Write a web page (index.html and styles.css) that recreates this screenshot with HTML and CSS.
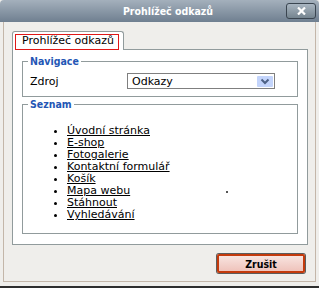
FILE: index.html
```html
<!DOCTYPE html>
<html lang="cs">
<head>
   <meta charset="UTF-8">
   <title>Prohlížeč odkazů</title>
   <link rel="stylesheet" href="styles.css">
</head>
<body>
   <div class="window">
      <div class="titlebar">
         <span class="title">Prohlížeč odkazů</span>
         <button class="close" type="button" aria-label="Zavřít">
            <svg width="9" height="8" viewBox="0 0 9 8"><path d="M1 0.5 L8 7.5 M8 0.5 L1 7.5" stroke="#fff" stroke-width="2.2" fill="none"/></svg>
         </button>
      </div>

      <div class="frame">
         <div class="tabs">
            <div class="tab"><span class="tab-label">Prohlížeč odkazů</span></div>
         </div>

         <div class="panel">
            <fieldset class="group">
               <legend>Navigace</legend>
               <div class="row">
                  <label>Zdroj</label>
                  <div class="select">
                     <span class="select-value">Odkazy</span>
                     <span class="select-arrow">
                        <svg width="10" height="7" viewBox="0 0 10 7"><path d="M1.5 1.5 L5 5 L8.5 1.5" stroke="#4d6185" stroke-width="2" fill="none"/></svg>
                     </span>
                  </div>
               </div>
            </fieldset>

            <fieldset class="group list-group">
               <legend>Seznam</legend>
               <ul class="links">
                  <li><a href="#">Úvodní stránka</a></li>
                  <li><a href="#">E-shop</a></li>
                  <li><a href="#">Fotogalerie</a></li>
                  <li><a href="#">Kontaktní formulář</a></li>
                  <li><a href="#">Košík</a></li>
                  <li><a href="#">Mapa webu</a></li>
                  <li><a href="#">Stáhnout</a></li>
                  <li><a href="#">Vyhledávání</a></li>
               </ul>
               <span class="speck"></span>
            </fieldset>
         </div>

         <div class="actions">
            <button class="btn-cancel" type="button">Zrušit</button>
         </div>
      </div>
   </div>
</body>
</html>
```

FILE: styles.css
```css
body {
   margin: 0;
   background-color: #efeeeb;
   font-family: "DejaVu Sans", Verdana, sans-serif;
   font-size: 11px;
   color: #000;
}

.window {
   width: 319px;
   height: 286px;
   border-bottom: 2px solid #2e2e2e;
   background-color: #efeeeb;
}

.titlebar {
   height: 22px;
   display: flex;
   align-items: center;
   background: linear-gradient(#a4b0bc, #6f7f90);
   border-radius: 4px 4px 0 0;
}

.title {
   flex: 1;
   padding-left: 50px;
   text-align: center;
   color: #fff;
   font-family: "DejaVu Sans Condensed", "DejaVu Sans", sans-serif;
   font-stretch: condensed;
   font-weight: bold;
   font-size: 10.5px;
}

.close {
   width: 30px;
   height: 16px;
   margin-right: 3px;
   padding: 0;
   display: flex;
   align-items: center;
   justify-content: center;
   border: 1px solid #3a4550;
   border-radius: 3px;
   background: linear-gradient(#a9b5c1, #75848f);
}

.frame {
   height: 260px;
   margin: 0 3px;
   padding: 9px 7px 0 8px;
   border: 1px solid #c3b6a9;
   border-top: 0;
   box-sizing: border-box;
}

.tabs {
   display: flex;
}

.tab {
   position: relative;
   z-index: 1;
   margin-bottom: -1px;
   padding: 2px 4px 0 2px;
   background-color: #fff;
   border: 1px solid #919b9c;
   border-bottom: 0;
   border-radius: 3px 3px 0 0;
}

.tab-label {
   display: block;
   padding: 0 4px 3px 6px;
   line-height: 11px;
   border: 1px solid #e01818;
}

.panel {
   padding: 6px 9px 10px;
   background-color: #fff;
   border: 1px solid #919b9c;
}

.group {
   margin: 0;
   padding: 7px;
   min-width: 0;
   border: 1px solid #919b9c;
}

.group legend {
   margin-left: -2px;
   padding: 0 2px;
   line-height: 10px;
   color: #2356b5;
   font-family: "DejaVu Sans Condensed", "DejaVu Sans", sans-serif;
   font-stretch: condensed;
   font-weight: bold;
   font-size: 10.5px;
}

.row {
   display: flex;
   align-items: center;
   height: 16px;
}

.row label {
   width: 97px;
}

.select {
   width: 148px;
   height: 16px;
   box-sizing: border-box;
   display: flex;
   align-items: center;
   padding-left: 4px;
   border: 1px solid #7f7f7f;
   background-color: #fff;
}

.select-value {
   flex: 1;
}

.select-arrow {
   width: 16px;
   height: 11px;
   margin: 1px 1px 0 0;
   display: flex;
   align-items: center;
   justify-content: center;
   background-color: #c3d4fb;
   border-radius: 1px;
}

.list-group {
   position: relative;
   margin-top: 2px;
   padding: 16px 7px 12px;
}

.links {
   margin: 0;
   padding-left: 37px;
   line-height: 12px;
}

.links a {
   color: #000;
   text-decoration: underline;
}

.speck {
   position: absolute;
   left: 203px;
   top: 82px;
   width: 2px;
   height: 2px;
   background-color: #555;
}

.actions {
   display: flex;
   justify-content: flex-end;
   padding-top: 9px;
}

.btn-cancel {
   width: 88px;
   height: 19px;
   margin-right: 3px;
   padding: 0;
   border: 2px solid #c43a0c;
   border-radius: 2px;
   box-shadow: 0 0 0 1px #5c5c5c;
   background: linear-gradient(#f8e4e0, #efc3bb);
   color: #000;
   font-family: "DejaVu Sans Condensed", "DejaVu Sans", sans-serif;
   font-stretch: condensed;
   font-weight: bold;
   font-size: 10.5px;
}
```
